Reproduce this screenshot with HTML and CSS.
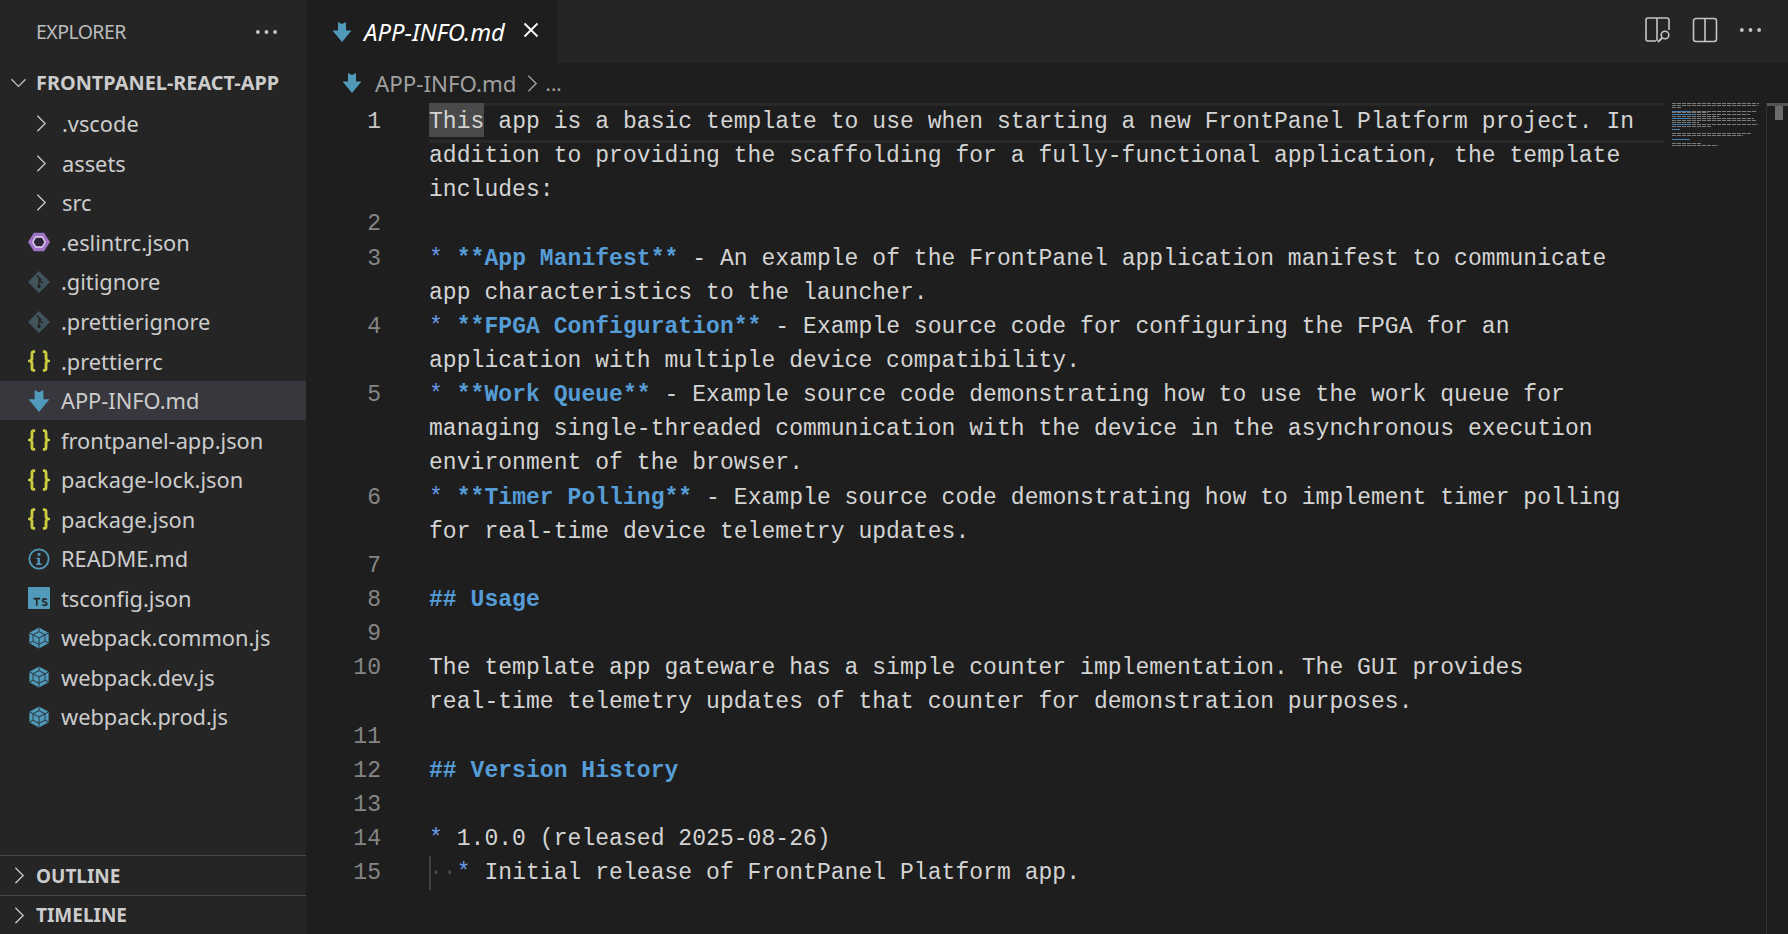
FILE: index.html
```html
<!DOCTYPE html>
<html lang="en">
<head>
<meta charset="utf-8">
<title>APP-INFO.md</title>
<link rel="stylesheet" href="styles.css">
</head>
<body>
<svg class="sprite" width="0" height="0" aria-hidden="true">
  <symbol id="i-md" viewBox="0 0 20 20"><path d="M6 0l4 2 4-2v8.500h5.500L10 20 .5 8.500H6z" fill="#519aba"/></symbol>
  <symbol id="i-git" viewBox="0 0 20 20"><path d="M10 0l10 10-10 10L0 10z" fill="#41535b"/><path d="M8 4l4 4M10 6.500v8M10 8l3.500 3" stroke="#252526" stroke-width="1.300" fill="none"/><circle cx="10" cy="14" r="1.600" fill="#252526"/></symbol>
  <symbol id="i-json" viewBox="0 0 20 20"><path d="M6.500 1.500H5.200C4 1.500 3.600 2.200 3.600 3.400V7.800C3.600 9 3 9.600 1.600 10c1.400.4 2 1 2 2.200v4.400c0 1.200.4 1.900 1.600 1.900h1.300M13.500 1.500h1.300c1.200 0 1.600.7 1.600 1.900v4.400c0 1.200.6 1.800 2 2.200-1.400.4-2 1-2 2.200v4.400c0 1.200-.4 1.900-1.600 1.900h-1.300" fill="none" stroke="#cbcb41" stroke-width="2.600"/></symbol>
  <symbol id="i-eslint" viewBox="0 0 24 24"><path d="M6.500 2h11L24 12l-6.500 10h-11L0 12z" fill="#a074c4"/><path d="M8.500 6.500h7l3.200 5.500-3.200 5.500h-7L5.300 12z" fill="#2d2438" stroke="#e3d5f0" stroke-width="1.500"/></symbol>
  <symbol id="i-info" viewBox="0 0 24 24"><circle cx="12" cy="12" r="10.500" fill="none" stroke="#519aba" stroke-width="2"/><rect x="10.500" y="5.500" width="3" height="3" fill="#519aba"/><path d="M9 10.500h4v6.500h2v1.500H9V17h1.500v-5H9z" fill="#519aba"/></symbol>
  <symbol id="i-ts" viewBox="0 0 20 20"><rect width="20" height="20" rx="1" fill="#519aba"/><path d="M5 10.500h6M8 10.500V17M17 11.500c-.8-.9-3.800-1.200-3.800.7 0 1.900 4 1.100 4 3 0 1.900-3.200 1.800-4.300.7" fill="none" stroke="#252526" stroke-width="1.500"/></symbol>
  <symbol id="i-webpack" viewBox="0 0 24 24"><path d="M12 .5l10.500 5.800v11.400L12 23.500 1.500 17.700V6.300z" fill="#519aba"/><path d="M12 5l6.500 3.600v6.800L12 19l-6.500-3.600V8.600zM5.500 8.600L12 12l6.500-3.600M12 12v7M12 .5V5M1.500 6.300l4 2.300M22.500 6.300l-4 2.300M1.500 17.700l4-2.300M22.500 17.700l-4-2.300M12 19v4.500" fill="none" stroke="#2b3a45" stroke-width="1.100"/></symbol>
  <symbol id="i-right" viewBox="0 0 12 20"><path d="M1.500 1.500L10 10l-8.500 8.500" fill="none" stroke="currentColor" stroke-width="1.500"/></symbol>
  <symbol id="i-down" viewBox="0 0 20 12"><path d="M1.500 1.500L10 10l8.500-8.500" fill="none" stroke="currentColor" stroke-width="1.500"/></symbol>
  <symbol id="i-dots" viewBox="0 0 24 6"><circle cx="3" cy="3" r="2" fill="currentColor"/><circle cx="12" cy="3" r="2" fill="currentColor"/><circle cx="21" cy="3" r="2" fill="currentColor"/></symbol>
</svg>

<div class="app">
  <aside class="sidebar">
    <header class="side-head">
      <span class="side-title">EXPLORER</span>
      <svg class="side-dots"><use href="#i-dots"/></svg>
    </header>
    <div class="root-row">
      <svg class="chev-down"><use href="#i-down"/></svg>
      <span>FRONTPANEL-REACT-APP</span>
    </div>
    <ul class="tree">
      <li class="row"><svg class="chev"><use href="#i-right"/></svg><span>.vscode</span></li>
      <li class="row"><svg class="chev"><use href="#i-right"/></svg><span>assets</span></li>
      <li class="row"><svg class="chev"><use href="#i-right"/></svg><span>src</span></li>
      <li class="row"><svg class="ficon wide"><use href="#i-eslint"/></svg><span>.eslintrc.json</span></li>
      <li class="row"><svg class="ficon"><use href="#i-git"/></svg><span>.gitignore</span></li>
      <li class="row"><svg class="ficon"><use href="#i-git"/></svg><span>.prettierignore</span></li>
      <li class="row"><svg class="ficon"><use href="#i-json"/></svg><span>.prettierrc</span></li>
      <li class="row selected"><svg class="ficon"><use href="#i-md"/></svg><span>APP-INFO.md</span></li>
      <li class="row"><svg class="ficon"><use href="#i-json"/></svg><span>frontpanel-app.json</span></li>
      <li class="row"><svg class="ficon"><use href="#i-json"/></svg><span>package-lock.json</span></li>
      <li class="row"><svg class="ficon"><use href="#i-json"/></svg><span>package.json</span></li>
      <li class="row"><svg class="ficon"><use href="#i-info"/></svg><span>README.md</span></li>
      <li class="row"><svg class="ficon"><use href="#i-ts"/></svg><span>tsconfig.json</span></li>
      <li class="row"><svg class="ficon"><use href="#i-webpack"/></svg><span>webpack.common.js</span></li>
      <li class="row"><svg class="ficon"><use href="#i-webpack"/></svg><span>webpack.dev.js</span></li>
      <li class="row"><svg class="ficon"><use href="#i-webpack"/></svg><span>webpack.prod.js</span></li>
    </ul>
    <div class="panel"><svg class="chev-panel"><use href="#i-right"/></svg><span>OUTLINE</span></div>
    <div class="panel"><svg class="chev-panel"><use href="#i-right"/></svg><span>TIMELINE</span></div>
  </aside>

  <main class="main">
    <div class="tabbar">
      <div class="tab">
        <svg class="tab-icon"><use href="#i-md"/></svg>
        <span class="tab-name">APP-INFO.md</span>
        <svg class="tab-close" viewBox="0 0 16 16"><path d="M1.500 1.500l13 13M14.500 1.500l-13 13" stroke="#fff" stroke-width="1.800" fill="none"/></svg>
      </div>
      <div class="actions">
        <svg class="act" viewBox="0 0 26 26"><path d="M11 24H3a2 2 0 0 1-2-2V3a2 2 0 0 1 2-2h19a2 2 0 0 1 2 2v10M12 1v23" fill="none" stroke="#c5c5c5" stroke-width="1.600"/><circle cx="20" cy="18" r="3.800" fill="#252526" stroke="#c5c5c5" stroke-width="1.600"/><path d="M17 21l-4 4" stroke="#c5c5c5" stroke-width="1.800"/></svg>
        <svg class="act" viewBox="0 0 26 26"><path d="M4 1.500h18a2.500 2.500 0 0 1 2.500 2.500v18a2.500 2.500 0 0 1-2.500 2.500H4A2.500 2.500 0 0 1 1.500 22V4A2.500 2.500 0 0 1 4 1.500zM13 1.500v23" fill="none" stroke="#c5c5c5" stroke-width="1.600"/></svg>
        <svg class="act-dots"><use href="#i-dots"/></svg>
      </div>
    </div>
    <nav class="crumbs">
      <svg class="crumb-icon"><use href="#i-md"/></svg>
      <span>APP-INFO.md</span>
      <svg class="crumb-sep"><use href="#i-right"/></svg>
      <span class="crumb-more">...</span>
    </nav>
    <div class="editor">
      <div class="code">
        <div class="line current"><span class="num">1</span><div class="text"><div><span class="word-hl">This</span> app is a basic template to use when starting a new FrontPanel Platform project. In</div><div>addition to providing the scaffolding for a fully-functional application, the template</div><div>includes:</div></div></div>
        <div class="line"><span class="num">2</span><div class="text"><div> </div></div></div>
        <div class="line"><span class="num">3</span><div class="text"><div><span class="mark">*</span> <span class="strong">**App Manifest**</span> - An example of the FrontPanel application manifest to communicate</div><div>app characteristics to the launcher.</div></div></div>
        <div class="line"><span class="num">4</span><div class="text"><div><span class="mark">*</span> <span class="strong">**FPGA Configuration**</span> - Example source code for configuring the FPGA for an</div><div>application with multiple device compatibility.</div></div></div>
        <div class="line"><span class="num">5</span><div class="text"><div><span class="mark">*</span> <span class="strong">**Work Queue**</span> - Example source code demonstrating how to use the work queue for</div><div>managing single-threaded communication with the device in the asynchronous execution</div><div>environment of the browser.</div></div></div>
        <div class="line"><span class="num">6</span><div class="text"><div><span class="mark">*</span> <span class="strong">**Timer Polling**</span> - Example source code demonstrating how to implement timer polling</div><div>for real-time device telemetry updates.</div></div></div>
        <div class="line"><span class="num">7</span><div class="text"><div> </div></div></div>
        <div class="line"><span class="num">8</span><div class="text"><div><span class="strong">## Usage</span></div></div></div>
        <div class="line"><span class="num">9</span><div class="text"><div> </div></div></div>
        <div class="line"><span class="num">10</span><div class="text"><div>The template app gateware has a simple counter implementation. The GUI provides</div><div>real-time telemetry updates of that counter for demonstration purposes.</div></div></div>
        <div class="line"><span class="num">11</span><div class="text"><div> </div></div></div>
        <div class="line"><span class="num">12</span><div class="text"><div><span class="strong">## Version History</span></div></div></div>
        <div class="line"><span class="num">13</span><div class="text"><div> </div></div></div>
        <div class="line"><span class="num">14</span><div class="text"><div><span class="mark">*</span> 1.0.0 (released 2025-08-26)</div></div></div>
        <div class="line"><span class="num">15</span><div class="text"><div><span class="ws">··</span><span class="mark">*</span> Initial release of FrontPanel Platform app.</div></div></div>
      </div>
      <div class="minimap" aria-hidden="true">
        <i class="mm" style="width:87px"></i><i class="mm" style="width:86px"></i><i class="mm" style="width:9px"></i><i class="mm gap"></i>
        <i class="mm li" style="width:85px;--b:18px"></i><i class="mm" style="width:36px"></i>
        <i class="mm li" style="width:78px;--b:24px"></i><i class="mm" style="width:47px"></i>
        <i class="mm li" style="width:82px;--b:16px"></i><i class="mm" style="width:84px"></i><i class="mm" style="width:27px"></i>
        <i class="mm li" style="width:86px;--b:19px"></i><i class="mm" style="width:39px"></i><i class="mm gap"></i>
        <i class="mm blue" style="width:8px"></i><i class="mm gap"></i>
        <i class="mm" style="width:79px"></i><i class="mm" style="width:71px"></i><i class="mm gap"></i>
        <i class="mm blue" style="width:18px"></i><i class="mm gap"></i>
        <i class="mm" style="width:29px"></i><i class="mm" style="width:46px"></i>
      </div>
      <div class="scroll"><div class="scroll-top"></div><div class="scroll-thumb"></div></div>
    </div>
  </main>
</div>
</body>
</html>
```

FILE: styles.css
```css
* { box-sizing: border-box; }
html, body { margin: 0; height: 100%; overflow: hidden; background: #1e1e1e; }
.sprite { position: absolute; }
.app { display: flex; height: 934px; font-family: "Noto Sans", "Open Sans", sans-serif; color: #cccccc; }

/* sidebar */
.sidebar { width: 306px; flex: none; background: #252526; display: flex; flex-direction: column; }
.side-head { height: 63px; flex: none; display: flex; align-items: center; justify-content: space-between; padding: 0 28px 0 36px; }
.side-title { font-size: 19.500px; letter-spacing: -0.550px; color: #bbbbbb; }
.side-dots { width: 23px; height: 6px; color: #c5c5c5; }
.root-row { height: 39px; flex: none; display: flex; align-items: center; padding-left: 10px; gap: 9px; font-size: 19.900px; font-weight: 700; color: #cccccc; }
.chev-down { width: 17px; height: 10px; color: #c5c5c5; }
.tree { list-style: none; margin: 0; padding: 2px 0 0; flex: 1; }
.row { height: 39.550px; display: flex; align-items: center; font-size: 21.800px; color: #cccccc; padding-left: 28px; }
.row.selected { background: #37373d; }
.chev { width: 11px; height: 19px; color: #c5c5c5; margin: 0 15px 0 8px; }
.ficon { width: 22px; height: 22px; margin-right: 11px; }
.ficon.wide { width: 24px; margin-left: -1px; margin-right: 10px; }
.panel { height: 40px; flex: none; border-top: 1px solid #4a4a4b; display: flex; align-items: center; padding-left: 14px; gap: 11px; font-size: 19px; font-weight: 700; color: #cccccc; }
.panel + .panel { height: 39px; }
.chev-panel { width: 11px; height: 19px; color: #c5c5c5; }

/* main */
.main { flex: 1; min-width: 0; display: flex; flex-direction: column; }
.tabbar { height: 63px; flex: none; background: #252526; display: flex; justify-content: space-between; }
.tab { width: 251px; background: #1e1e1e; display: flex; align-items: center; padding-left: 26px; }
.tab-icon { width: 20px; height: 20px; margin-right: 12px; }
.tab-name { font-size: 23.850px; font-style: italic; color: #ffffff; }
.tab-close { width: 16px; height: 16px; margin-left: 18px; margin-top: -3px; }
.actions { display: flex; align-items: center; gap: 21px; padding-right: 26px; padding-bottom: 4px; }
.act { width: 26px; height: 26px; }
.act-dots { width: 23px; height: 6px; color: #c5c5c5; }

.crumbs { height: 40px; flex: none; display: flex; align-items: center; padding-left: 36px; font-size: 22.300px; color: #a0a0a0; }
.crumb-icon { width: 20px; height: 20px; margin-right: 13px; }
.crumb-sep { width: 11px; height: 19px; margin: 0 8px 0 10px; color: #a0a0a0; }
.crumb-more { font-size: 20px; }

/* editor */
.editor { flex: 1; min-height: 0; position: relative; background: #1e1e1e; }
.code { font-family: "Liberation Mono", "DejaVu Sans Mono", monospace; font-size: 23px; letter-spacing: 0.050px; line-height: 34.140px; color: #d4d4d4; padding-top: 2px; }
.line { display: flex; }
.num { width: 75px; flex: none; text-align: right; color: #858585; }
.current .num { color: #c6c6c6; }
.text { margin-left: 48px; white-space: pre; }
.current::before { content: ""; position: absolute; top: 0; left: 123px; right: 124px; height: 34px; border-top: 3px solid #282828; border-bottom: 3px solid #282828; }
.word-hl { display: inline-block; position: relative; z-index: 0; }
.word-hl::before { content: ""; position: absolute; left: 0; right: 0; top: -2px; height: 34px; background: #4a4a4a; z-index: -1; }
.mark { color: #6796e6; }
.strong { color: #569cd6; font-weight: 700; }
.ws { color: #4a4a4a; display: inline-block; box-shadow: inset 2px 0 0 #404040; }

.minimap { position: absolute; top: 0; left: 1366px; width: 90px; display: flex; flex-direction: column; }
.mm { display: block; height: 1px; margin-bottom: 0.900px; background: repeating-linear-gradient(90deg, #7a7a7a 0 4px, #2c2c2c 4px 5px); }
.mm.li { background: linear-gradient(#4a7fb0, #4a7fb0) 0 0 / var(--b) 100% no-repeat, repeating-linear-gradient(90deg, #7a7a7a 0 4px, #2c2c2c 4px 5px); }
.mm.gap { background: none; }
.mm.blue { background: #4a7fb0; }
.scroll { position: absolute; top: 0; right: 0; width: 22px; height: 831px; border-left: 1px solid #333333; }
.scroll-top { height: 3px; background: #555555; }
.scroll-thumb { width: 8px; height: 14px; margin-left: 8px; background: #6b6b6b; }
```
